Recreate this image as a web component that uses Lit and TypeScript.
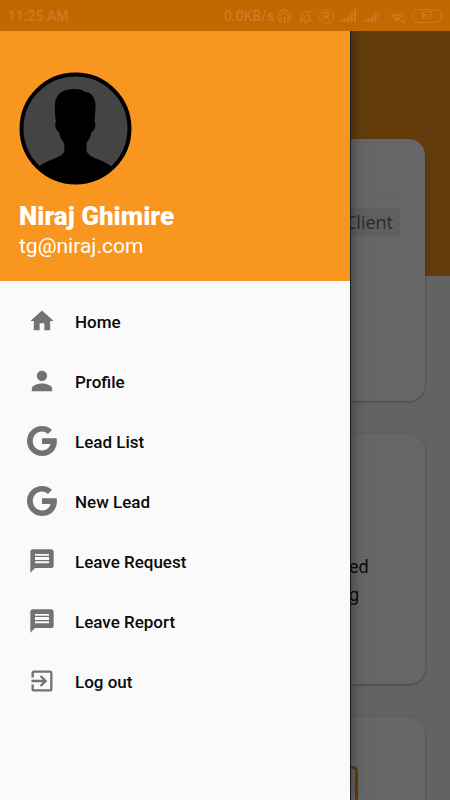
import { LitElement, html, css, svg } from "lit";
import { customElement, property } from "lit/decorators.js";

const icons = {
  home: { box: "0 0 24 24", shape: svg`<path d="M10 20v-6h4v6h5v-8h3L12 3 2 12h3v8z"/>` },
  person: {
    box: "1 1 22 22",
    shape: svg`<path d="M12 12c2.210 0 4-1.790 4-4s-1.790-4-4-4-4 1.790-4 4 1.790 4 4 4zm0 2c-2.670 0-8 1.340-8 4v2h16v-2c0-2.660-5.330-4-8-4z"/>`,
  },
  google: {
    box: "0 0 30 30",
    shape: svg`<path d="M15 12.200h14.600c.2.9.3 1.800.3 2.800C29.900 23.900 23.900 30 15 30 6.700 30 0 23.300 0 15S6.700 0 15 0c4 0 7.400 1.500 10 3.900l-4.200 4.100C19.600 6.900 17.600 5.600 15 5.600c-5.100 0-9.200 4.200-9.200 9.400s4.100 9.400 9.200 9.400c5.900 0 8.100-4.200 8.500-6.400H15z"/>`,
  },
  chat: {
    box: "0 0 24 24",
    shape: svg`<path fill-rule="evenodd" d="M20 2H4c-1.100 0-1.990.9-1.990 2L2 22l4-4h14c1.100 0 2-.9 2-2V4c0-1.100-.9-2-2-2zM6 6h12v8H6z"/><path d="M6 7.600h12v1H6zM6 11.200h12v1H6z"/>`,
  },
  exit: {
    box: "0 0 24 24",
    shape: svg`<path d="M10.090 15.590L11.500 17l5-5-5-5-1.410 1.410L12.670 11H3v2h9.670l-2.580 2.590zM19 3H5c-1.110 0-2 .9-2 2v4h2V5h14v14H5v-4H3v4c0 1.100.89 2 2 2h14c1.100 0 2-.9 2-2V5c0-1.100-.9-2-2-2z"/>`,
  },
};

type IconName = keyof typeof icons;

const menu: { icon: IconName; label: string }[] = [
  { icon: "home", label: "Home" },
  { icon: "person", label: "Profile" },
  { icon: "google", label: "Lead List" },
  { icon: "google", label: "New Lead" },
  { icon: "chat", label: "Leave Request" },
  { icon: "chat", label: "Leave Report" },
  { icon: "exit", label: "Log out" },
];

@customElement("status-bar")
class StatusBar extends LitElement {
  static styles = css`
    :host {
      display: flex;
      align-items: center;
      justify-content: space-between;
      box-sizing: border-box;
      height: 31px;
      padding: 1px 8px 0;
      background: #c16800;
      color: #cd7b25;
      font: 500 14px/20px Roboto, sans-serif;
    }
    .right {
      display: flex;
      align-items: center;
      gap: 6px;
    }
    .rate {
      margin-right: -3px;
    }
    svg {
      display: block;
      fill: none;
      stroke: currentColor;
      stroke-width: 1.3;
    }
    .solid {
      fill: currentColor;
      stroke: none;
    }
    .ring,
    .battery {
      box-sizing: border-box;
      border: 1px solid currentColor;
      text-align: center;
      font-weight: 700;
    }
    .ring {
      width: 15px;
      height: 15px;
      border-radius: 8px;
      font-size: 10px;
      line-height: 13px;
    }
    .battery {
      width: 30px;
      height: 14px;
      border-radius: 7px;
      font-size: 10px;
      line-height: 12px;
    }
  `;

  signal(faded: number) {
    return html`
      <svg class="solid" width="18" height="14" viewBox="0 0 18 14" aria-hidden="true">
        ${[2, 4, 7, 10, 13].map(
          (h, i) =>
            svg`<rect x=${i * 3.5} y=${13 - h} width="2.200" height=${h} opacity=${i >= faded ? 0.3 : 1} />`
        )}
      </svg>`;
  }

  render() {
    return html`
      <span>11:25 AM</span>
      <div class="right">
        <span class="rate">0.0KB/s</span>
        <svg width="15" height="15" viewBox="0 0 15 15" aria-hidden="true">
          <path d="M5 13.300a6.400 6.400 0 1 1 5 0M4.800 10.400a3.700 3.700 0 1 1 5.400 0M7.500 8v6" />
        </svg>
        <svg width="15" height="15" viewBox="0 0 15 15" aria-hidden="true">
          <path d="M1 14L14 1M3.500 9V6.500a4 4 0 0 1 6-3.500M11.500 6v3.500l1.500 2H5.500M6 13.500h3M1.500 11.500L3.500 9" />
        </svg>
        <span class="ring">R</span>
        ${this.signal(5)} ${this.signal(4)}
        <svg width="18" height="15" viewBox="0 0 18 15" aria-hidden="true">
          <path d="M1 5a12 12 0 0 1 16 0" opacity=".35" />
          <path d="M3.500 8a8 8 0 0 1 11 0M6 10.700a4.500 4.500 0 0 1 6 0" stroke-width="2" />
          <path d="M9 11.500v2M14 11v3M16.500 11v3" />
        </svg>
        <span class="battery">67</span>
      </div>
    `;
  }
}

@customElement("nav-item")
class NavItem extends LitElement {
  @property() icon: IconName = "home";
  @property() label = "";

  static styles = css`
    :host {
      display: block;
    }
    .link {
      display: grid;
      grid-template-columns: 30px 1fr;
      align-items: center;
      column-gap: 18px;
      height: 60px;
      padding: 0 27px;
      color: #0a0a0a;
      font: 500 17px/24px Roboto, sans-serif;
      text-decoration: none;
    }
    .icon {
      justify-self: center;
      width: 28px;
      height: 28px;
      margin-bottom: 2px;
      fill: #727272;
    }
    .icon.google {
      width: 30px;
      height: 30px;
    }
  `;

  render() {
    const { box, shape } = icons[this.icon];
    return html`
      <a class="link" href="#">
        <svg class="icon ${this.icon}" viewBox=${box} aria-hidden="true">${shape}</svg>
        <span>${this.label}</span>
      </a>
    `;
  }
}

@customElement("app-root")
class AppRoot extends LitElement {
  static styles = css`
    :host {
      display: flex;
      flex-direction: column;
      height: 100vh;
      font-family: Roboto, sans-serif;
    }
    .stage {
      position: relative;
      flex: 1;
      overflow: hidden;
    }
    .page {
      display: flex;
      flex-direction: column;
      gap: 33px;
      padding: 108px 25px 0;
      background: linear-gradient(#f8961f 245px, #f8f8f8 245px);
    }
    .card {
      box-sizing: border-box;
      min-height: 250px;
      border-radius: 16px;
      background: #fff;
      box-shadow: 0 1px 3px rgba(0, 0, 0, 0.3);
    }
    .card.search {
      display: flex;
      flex-direction: column;
      align-items: flex-end;
      min-height: 262px;
      padding: 56px 25px 0;
    }
    .rule {
      align-self: stretch;
      height: 1px;
      margin-bottom: 12px;
      background: #fafafa;
    }
    .chip {
      padding: 0 7px;
      border: 0;
      background: #ededed;
      color: #6e6e6e;
      font: 18px/28px "Open Sans", sans-serif;
    }
    .copy {
      margin: 0;
      padding: 119px 0 0 324px;
      color: #222;
      font-size: 18px;
      line-height: 28px;
    }
    .frame {
      box-sizing: border-box;
      width: 333px;
      height: 120px;
      margin-top: 49px;
      border: 3px solid #f8961f;
      border-radius: 5px;
    }
    .scrim {
      position: absolute;
      inset: 0;
      background: rgba(0, 0, 0, 0.6);
    }
    .drawer {
      position: absolute;
      inset: 0 auto 0 0;
      width: min(350px, 80%);
      background: #fafafa;
      box-shadow: 0 0 14px rgba(0, 0, 0, 0.5), 1px 0 0 #1b2a2c;
    }
    .profile {
      display: flex;
      flex-direction: column;
      box-sizing: border-box;
      height: 250px;
      padding: 41px 19px 0;
      background: #f8961f;
      color: #fff;
    }
    .avatar {
      width: 113px;
      height: 113px;
      margin-bottom: 15px;
    }
    .name {
      margin: 0;
      font-size: 26px;
      font-weight: 900;
      line-height: 32px;
    }
    .mail {
      margin: 0;
      font-size: 21px;
      line-height: 28px;
    }
    .nav {
      padding-top: 11px;
    }
  `;

  render() {
    return html`
      <status-bar></status-bar>
      <div class="stage">
        <main class="page">
          <section class="card search">
            <div class="rule"></div>
            <button class="chip">Client</button>
          </section>
          <section class="card"><p class="copy">ed<br />g</p></section>
          <section class="card"><div class="frame"></div></section>
        </main>
        <div class="scrim"></div>
        <aside class="drawer">
          <header class="profile">
            <svg class="avatar" viewBox="0 0 113 113" role="img" aria-label="Profile photo">
              <circle cx="56.500" cy="56.500" r="54" fill="#444" stroke="#000" stroke-width="4" />
              <path
                d="M20 95C28 87 45 86 45.500 78L45 71C42 67 40.500 64 40 60C37 59 35 52 37 50L36.500 47C36 40 35 33 37 27C40 19 48 17 56 17C61 17 64 18 66 20C73 20 77 27 76.500 35L75.500 50C78 53 75 59 72.500 60C72 64 70 68 67.500 71V78C68 86 84 87 93 95A54.500 54.500 0 0 1 20 95Z"
              />
            </svg>
            <h1 class="name">Niraj Ghimire</h1>
            <p class="mail">tg@niraj.com</p>
          </header>
          <nav class="nav">
            ${menu.map((m) => html`<nav-item .icon=${m.icon} .label=${m.label}></nav-item>`)}
          </nav>
        </aside>
      </div>
    `;
  }
}
